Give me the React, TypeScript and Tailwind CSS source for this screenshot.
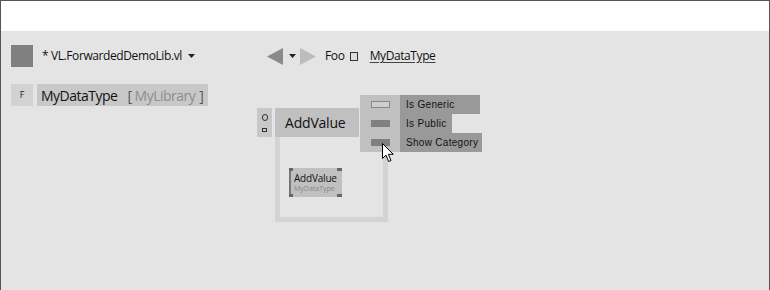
import React from "react";

const Triangle = ({ dir, color }: { dir: "left" | "right"; color: string }) => (
  <svg width="17" height="17" viewBox="0 0 17 17">
    {dir === "left" ? (
      <polygon points="16,0 16,17 0,8.5" fill={color} />
    ) : (
      <polygon points="1,0 1,17 17,8.5" fill={color} />
    )}
  </svg>
);

const Caret = () => (
  <svg width="7" height="4" viewBox="0 0 7 4">
    <polygon points="0,0 7,0 3.5,4" fill="#222" />
  </svg>
);

const Cursor = () => (
  <svg width="13" height="20" viewBox="0 0 13 20">
    <path
      d="M0.5 0.5 L0.5 15.5 L4 12.2 L6.6 18.5 L9 17.5 L6.4 11.3 L11.3 11.3 Z"
      fill="#fff"
      stroke="#000"
      strokeWidth="1"
      strokeLinejoin="miter"
    />
  </svg>
);

export default function App() {
  return (
    <div
      className="w-[770px] h-[290px] overflow-hidden border-x border-t border-[#555] flex flex-col bg-[#e4e4e4]"
      style={{ fontFamily: '"Open Sans", "Noto Sans", sans-serif' }}
    >
      <div className="h-[30px] bg-white shrink-0" />

      <div className="relative flex-1 px-[10px] pt-[14px]">
        {/* document header */}
        <div className="flex items-center h-[22px]">
          <div className="w-[22px] h-[22px] bg-[#808080]" />
          <span className="ml-[9px] text-[12px] tracking-[-0.4px] text-[#111]">* VL.ForwardedDemoLib.vl</span>
          <span className="ml-[6px] flex items-center">
            <Caret />
          </span>

          <div className="ml-[72px] flex items-center">
            <Triangle dir="left" color="#8a8a8a" />
            <span className="ml-[5px] flex items-center">
              <Caret />
            </span>
            <span className="ml-[3px]">
              <Triangle dir="right" color="#bdbdbd" />
            </span>
            <span className="ml-[9px] text-[12px] tracking-[-0.3px] text-[#111]">Foo</span>
            <span className="ml-[5px] w-[8px] h-[9px] border border-[#333] bg-[#ddd]" />
            <span className="ml-[12px] text-[12px] tracking-[-0.4px] text-[#111] underline underline-offset-2 decoration-[#444]">
              MyDataType
            </span>
          </div>
        </div>

        {/* type row */}
        <div className="flex items-center mt-[17px] h-[22px]">
          <div className="w-[22px] h-[22px] bg-[#d2d2d2] flex items-center justify-center text-[9px] text-[#222]">
            F
          </div>
          <div className="ml-[4px] h-[22px] w-[171px] bg-[#c8c8c8] flex items-center pl-[4px] text-[14px] tracking-[-0.5px]">
            <span className="text-[#111]">MyDataType</span>
            <span className="ml-[10px] text-[#555]">[</span>
            <span className="ml-[3px] text-[#8e8e8e]">MyLibrary</span>
            <span className="ml-[4px] text-[#555]">]</span>
          </div>
        </div>

        {/* AddValue node on canvas */}
        <div className="absolute left-[256px] top-[77px] w-[15px] h-[29px] bg-[#c8c8c8] flex flex-col items-center justify-center gap-[7px]">
          <span className="w-[6px] h-[7px] rounded-full border border-[#333]" />
          <span className="w-[5px] h-[4px] border border-[#333]" />
        </div>
        <div className="absolute left-[274px] top-[77px] w-[84px] h-[29px] bg-[#c0c0c0] flex items-center pl-[10px] text-[14px] tracking-[-0.2px] text-[#111]">
          AddValue
        </div>
        <div className="absolute left-[274px] top-[106px] w-[113px] h-[85px] border-[5px] border-t-0 border-[#d3d3d3]" />

        {/* inner node */}
        <div className="absolute left-[288px] top-[137px] w-[53px] h-[29px] bg-[#c0c0c0] border-l-2 border-[#777] pl-[3px] pt-[5px] leading-none">
          <div className="text-[10px] leading-[11px] tracking-[-0.2px] text-[#111]">AddValue</div>
          <div className="text-[7px] leading-[8px] text-[#888] mt-[1px]">MyDataType</div>
          <span className="absolute -left-[2px] top-0 w-[4px] h-[3px] bg-[#666]" />
          <span className="absolute -left-[2px] bottom-0 w-[4px] h-[3px] bg-[#666]" />
          <span className="absolute right-0 top-0 w-[5px] h-[3px] bg-[#666]" />
          <span className="absolute right-0 bottom-0 w-[5px] h-[3px] bg-[#666]" />
        </div>

        {/* context menu */}
        <div
          className="absolute left-[359px] top-[64px] flex text-[10px] text-[#111] tracking-[0.3px]"
          style={{ fontFamily: '"Liberation Sans", sans-serif' }}
        >
          <div className="w-[40px] h-[57px] bg-[#c0c0c0] flex flex-col items-center">
            <div className="h-[19px] flex items-center">
              <span className="w-[19px] h-[7px] border border-[#888] bg-[#cecece]" />
            </div>
            <div className="h-[19px] flex items-center">
              <span className="w-[19px] h-[7px] bg-[#808080]" />
            </div>
            <div className="h-[19px] flex items-center">
              <span className="w-[19px] h-[7px] bg-[#808080]" />
            </div>
          </div>
          <div className="flex flex-col items-start">
            <div className="h-[19px] w-[80px] bg-[#999] flex items-center pl-[6px]">Is Generic</div>
            <div className="h-[19px] w-[52px] bg-[#999] flex items-center pl-[6px]">Is Public</div>
            <div className="h-[19px] w-[82px] bg-[#999] flex items-center pl-[6px]">Show Category</div>
          </div>
        </div>

        <div className="absolute left-[381px] top-[112px]">
          <Cursor />
        </div>
      </div>
    </div>
  );
}
